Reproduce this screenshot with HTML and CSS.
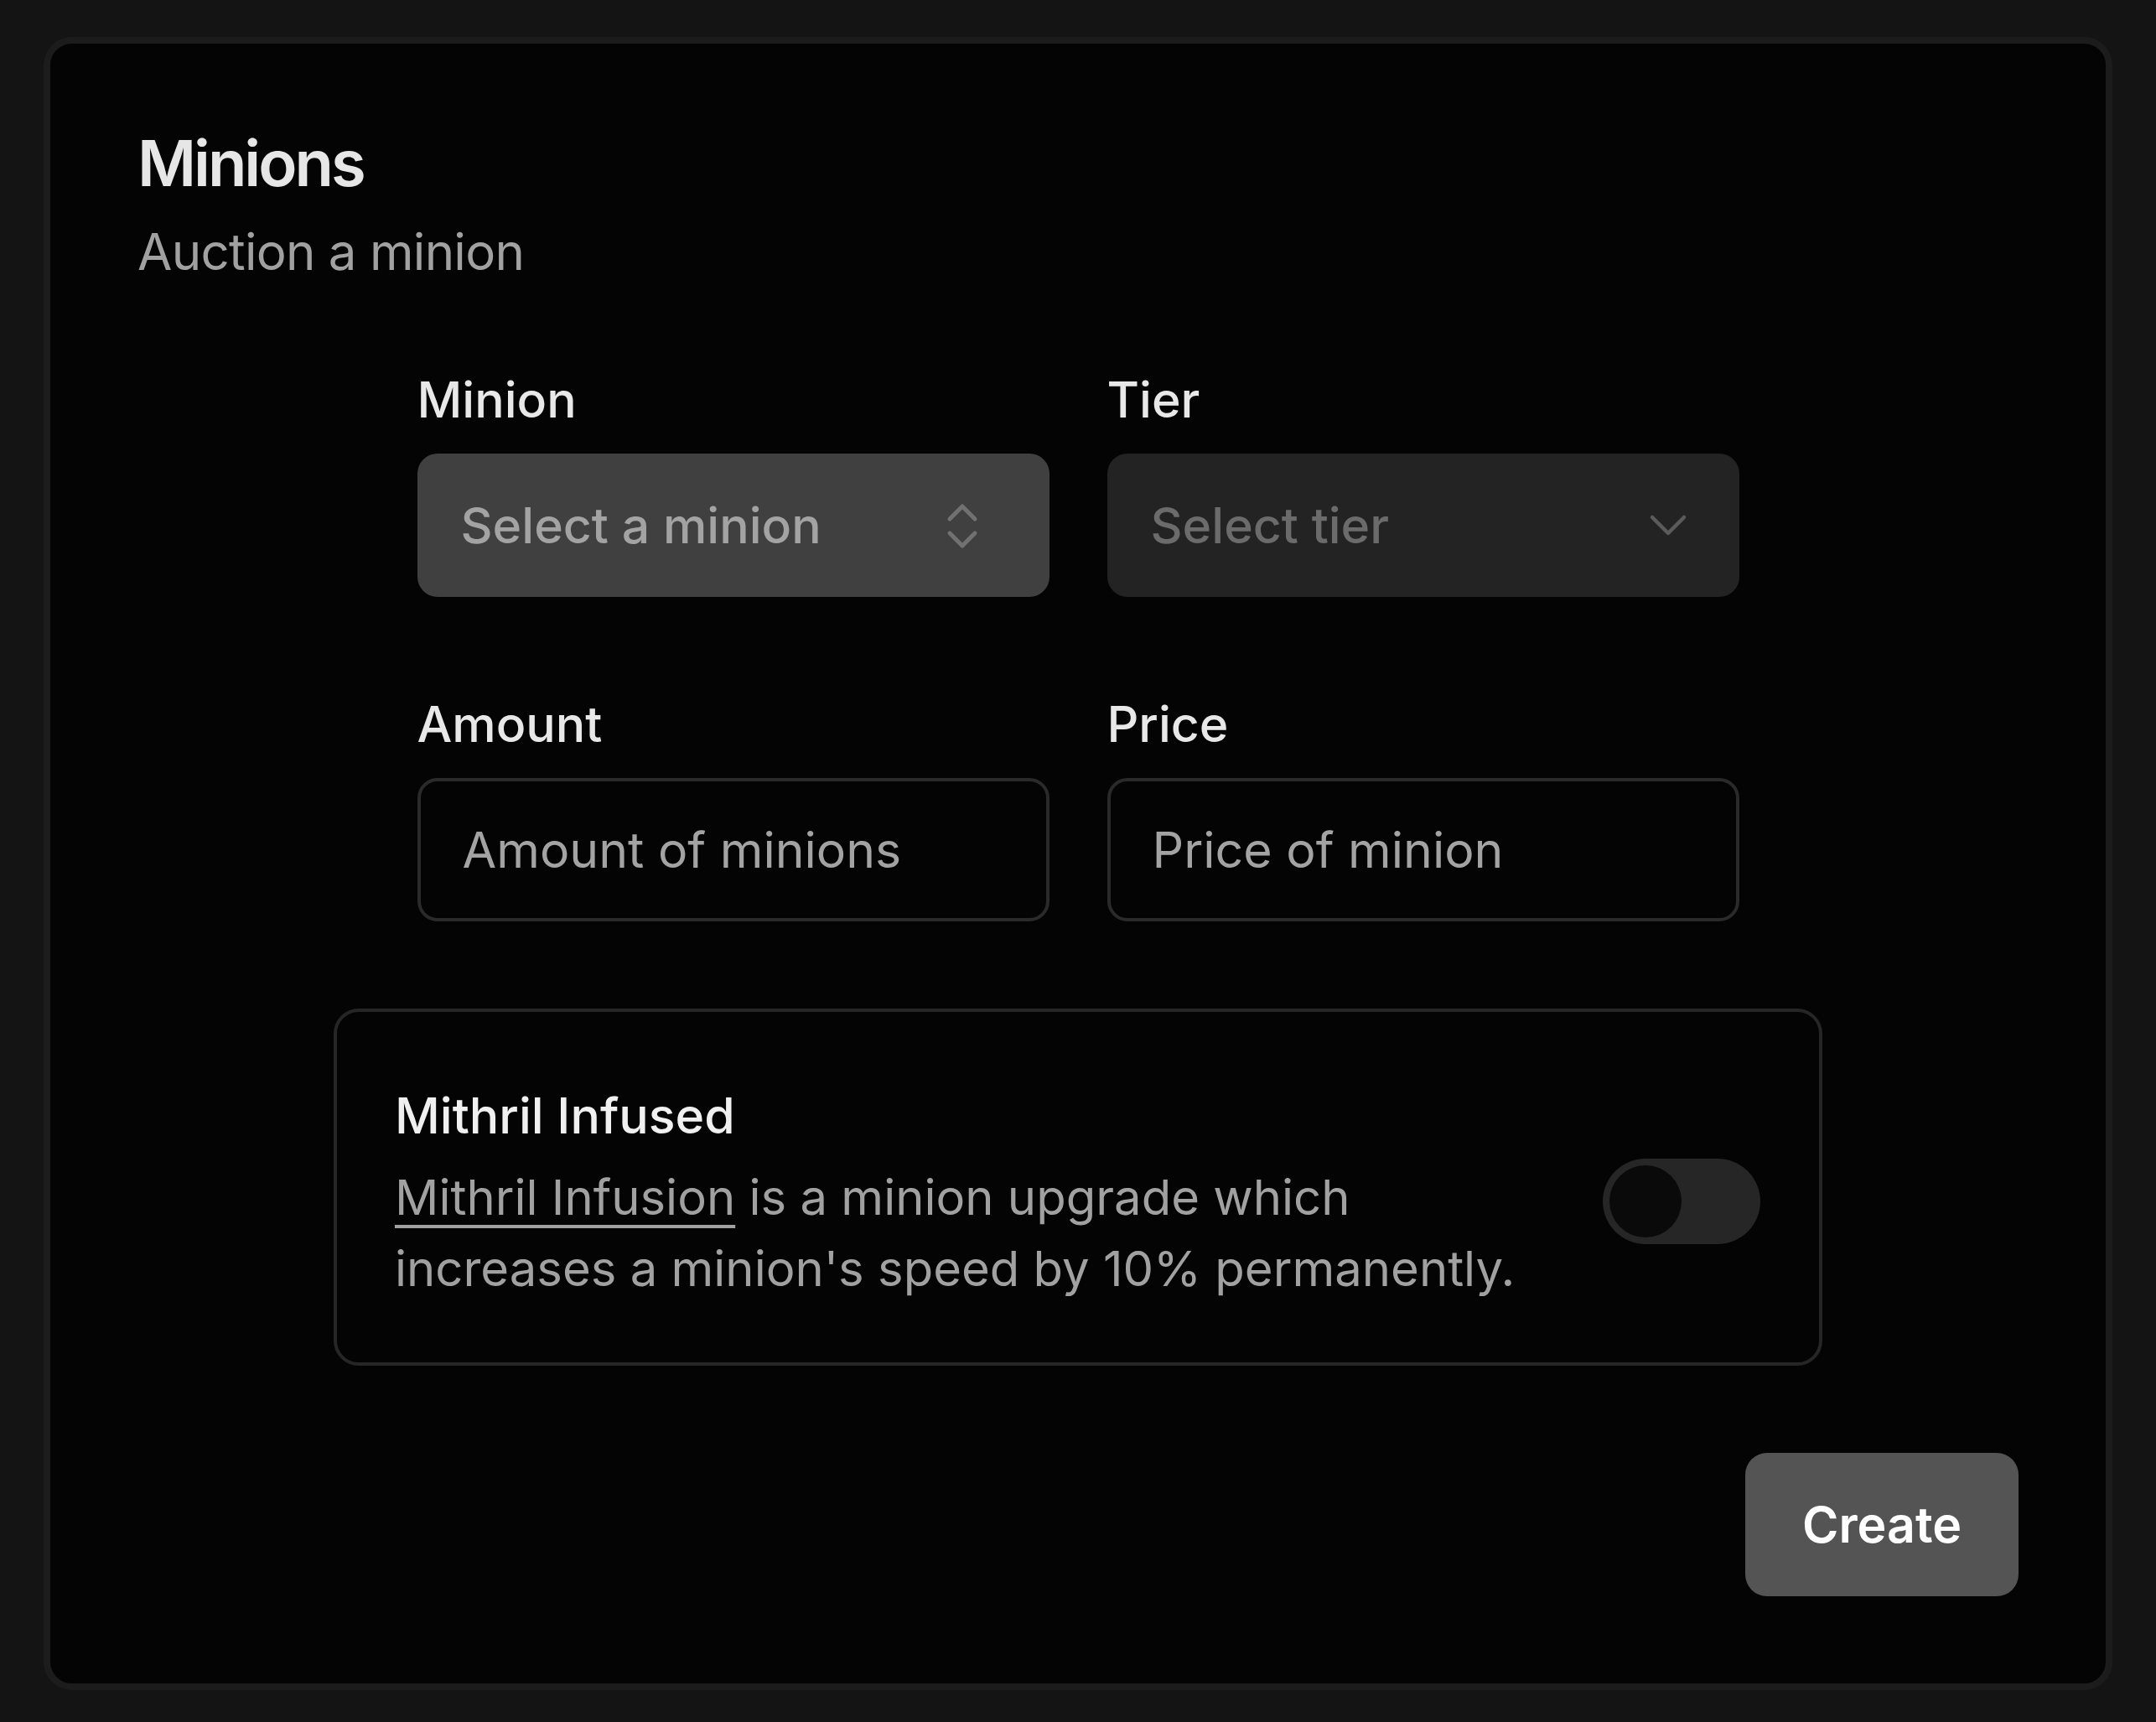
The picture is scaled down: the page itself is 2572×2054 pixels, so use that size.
FILE: index.html
```html
<!DOCTYPE html>
<html lang="en">
<head>
<meta charset="utf-8">
<title>Minions</title>
<link rel="stylesheet" href="styles.css">
</head>
<body>
<main class="card">
  <header class="card-header">
    <h1 class="card-title">Minions</h1>
    <p class="card-desc">Auction a minion</p>
  </header>
  <form class="form">
    <div class="grid">
      <div class="field">
        <label class="label">Minion</label>
        <div class="select select-active">
          <span class="select-value">Select a minion</span>
          <svg class="icon-updown" viewBox="0 0 40 56" width="40" height="56" aria-hidden="true">
            <path d="M5 20 L20 5 L35 20" />
            <path d="M5 37 L20 52 L35 37" />
          </svg>
        </div>
      </div>
      <div class="field">
        <label class="label">Tier</label>
        <div class="select select-disabled">
          <span class="select-value">Select tier</span>
          <svg class="icon-down" viewBox="0 0 46 28" width="46" height="28" aria-hidden="true">
            <path d="M4 4 L23 23 L42 4" />
          </svg>
        </div>
      </div>
      <div class="field">
        <label class="label">Amount</label>
        <div class="input"><span class="placeholder">Amount of minions</span></div>
      </div>
      <div class="field">
        <label class="label">Price</label>
        <div class="input"><span class="placeholder">Price of minion</span></div>
      </div>
    </div>
    <div class="switch-box">
      <div class="switch-text">
        <div class="switch-title">Mithril Infused</div>
        <p class="switch-desc"><a class="link" href="#">Mithril Infusion</a> is a minion upgrade which increases a minion's speed by 10% permanently.</p>
      </div>
      <div class="toggle"><span class="thumb"></span></div>
    </div>
    <div class="actions">
      <button type="button" class="btn">Create</button>
    </div>
  </form>
</main>
</body>
</html>
```

FILE: styles.css
```css
* { box-sizing: border-box; }
html, body { margin: 0; padding: 0; }
body {
  background: #141414;
  font-family: Inter, "Noto Sans", sans-serif;
  padding: 44px 52px 39px;
  min-height: 2054px;
}
.card {
  border: 8px solid #1c1c1c;
  border-radius: 34px;
  background: #040404;
  padding: 104px;
}
.card-title {
  margin: 0;
  font-size: 76px;
  line-height: 76px;
  font-weight: 600;
  letter-spacing: -0.04em;
  color: #e6e6e6;
}
.card-desc {
  margin: 26px 0 0;
  font-size: 60px;
  line-height: 84px;
  font-weight: 400;
  letter-spacing: -0.012em;
  color: #a1a1a1;
}
.form { margin-top: 105px; }
.grid {
  width: 1577px;
  margin: 0 auto;
  display: grid;
  grid-template-columns: 754px 754px;
  column-gap: 69px;
  row-gap: 122px;
}
.field { display: flex; flex-direction: column; gap: 35px; }
.label {
  font-size: 59px;
  line-height: 59px;
  font-weight: 500;
  color: #e8e8e8;
}
.select {
  height: 171px;
  border-radius: 24px;
  display: flex;
  align-items: center;
  justify-content: space-between;
  padding: 0 84px 0 52px;
  font-size: 59px;
  font-weight: 500;
}
.select-active { background: #404040; color: #a3a3a3; }
.select-disabled { background: #232323; color: #6b6b6b; padding-right: 62px; }
.icon-updown { fill: none; stroke: #717171; stroke-width: 5; stroke-linecap: round; stroke-linejoin: round; }
.icon-down { fill: none; stroke: #5b5b5b; stroke-width: 4.5; stroke-linecap: round; stroke-linejoin: round; }
.input {
  height: 171px;
  border: 4px solid #2a2a2a;
  border-radius: 24px;
  display: flex;
  align-items: center;
  padding: 0 48px 0 50px;
  font-size: 59px;
}
.placeholder { color: #a3a3a3; }
.switch-box {
  width: 1776px;
  margin: 104px auto 0;
  border: 4px solid #262626;
  border-radius: 30px;
  padding: 81px 70px 69px 69px;
  display: flex;
  align-items: center;
  justify-content: space-between;
}
.switch-title {
  font-size: 59px;
  line-height: 85px;
  font-weight: 500;
  color: #f0f0f0;
}
.switch-desc {
  margin: 13px 0 0;
  font-size: 58px;
  line-height: 85px;
  color: #a1a1a1;
  width: 1380px;
}
.link {
  color: #a1a1a1;
  text-decoration: underline;
  text-decoration-thickness: 4px;
  text-underline-offset: 12px;
}
.toggle {
  width: 188px;
  height: 102px;
  border-radius: 51px;
  background: #262626;
  padding: 8px;
  margin-top: 22px;
  flex-shrink: 0;
}
.thumb {
  display: block;
  width: 86px;
  height: 86px;
  border-radius: 50%;
  background: #0a0a0a;
}
.actions {
  display: flex;
  justify-content: flex-end;
  margin-top: 104px;
}
.btn {
  width: 326px;
  height: 171px;
  border: 0;
  border-radius: 26px;
  background: #545454;
  color: #ffffff;
  font-family: Inter, "Noto Sans", sans-serif;
  font-size: 59px;
  font-weight: 600;
}
```
